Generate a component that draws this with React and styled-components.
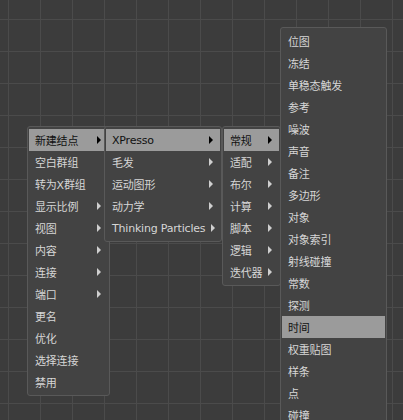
import React from 'react';
import styled, { createGlobalStyle } from 'styled-components';

const Global = createGlobalStyle`
  html, body {
    margin: 0;
    padding: 0;
    background: #3c3c3c;
    overflow: hidden;
  }
`;

const Canvas = styled.div`
  position: relative;
  width: 403px;
  height: 420px;
  overflow: hidden;
  background-color: #3c3c3c;
  background-image:
    linear-gradient(to right, #4b4b4b 1px, transparent 1px),
    linear-gradient(to bottom, #4b4b4b 1px, transparent 1px);
  background-size: 32px 32px;
  background-position: 8px 19px;
  font-family: 'DejaVu Sans', 'Noto Sans CJK SC', sans-serif;
  font-size: 11px;
`;

// popup menus float over the node canvas
const Menu = styled.div`
  position: absolute;
  left: ${(p) => p.left}px;
  top: ${(p) => p.top}px;
  width: ${(p) => p.width}px;
  box-sizing: border-box;
  display: flex;
  flex-direction: column;
  padding: 2px 1px 2px 1px;
  background: #434343;
  border: 1px solid #595959;
  border-radius: 3px;
  z-index: ${(p) => p.z};
`;

const Item = styled.div`
  height: 22px;
  display: flex;
  align-items: center;
  justify-content: space-between;
  padding: 0 7px 0 6px;
  background: ${(p) => (p.active ? '#9b9b9b' : 'transparent')};
  color: ${(p) => (p.active ? '#111' : '#d6d6d6')};
  white-space: nowrap;
  letter-spacing: -0.2px;
`;

const Arrow = styled.span`
  width: 0;
  height: 0;
  margin-left: 6px;
  border-top: 4px solid transparent;
  border-bottom: 4px solid transparent;
  border-left: 4px solid ${(p) => (p.active ? '#000' : '#cfcfcf')};
`;

const menus = [
  {
    left: 27, top: 126, width: 83, z: 1,
    items: [
      ['新建结点', true, true], ['空白群组'], ['转为X群组'], ['显示比例', true],
      ['视图', true], ['内容', true], ['连接', true], ['端口', true],
      ['更名'], ['优化'], ['选择连接'], ['禁用'],
    ],
  },
  {
    left: 104, top: 126, width: 118, z: 2,
    items: [
      ['XPresso', true, true], ['毛发', true], ['运动图形', true],
      ['动力学', true], ['Thinking Particles', true],
    ],
  },
  {
    left: 222, top: 126, width: 59, z: 3,
    items: [
      ['常规', true, true], ['适配', true], ['布尔', true], ['计算', true],
      ['脚本', true], ['逻辑', true], ['迭代器', true],
    ],
  },
  {
    left: 280, top: 27, width: 107, z: 4,
    items: [
      ['位图'], ['冻结'], ['单稳态触发'], ['参考'], ['噪波'], ['声音'],
      ['备注'], ['多边形'], ['对象'], ['对象索引'], ['射线碰撞'], ['常数'],
      ['探测'], ['时间', false, true], ['权重贴图'], ['样条'], ['点'], ['碰撞'],
    ],
  },
];

export default function App() {
  return (
    <Canvas>
      <Global />
      {menus.map((m, i) => (
        <Menu key={i} left={m.left} top={m.top} width={m.width} z={m.z}>
          {m.items.map(([label, sub, active]) => (
            <Item key={label} active={active}>
              <span>{label}</span>
              {sub && <Arrow active={active} />}
            </Item>
          ))}
        </Menu>
      ))}
    </Canvas>
  );
}
